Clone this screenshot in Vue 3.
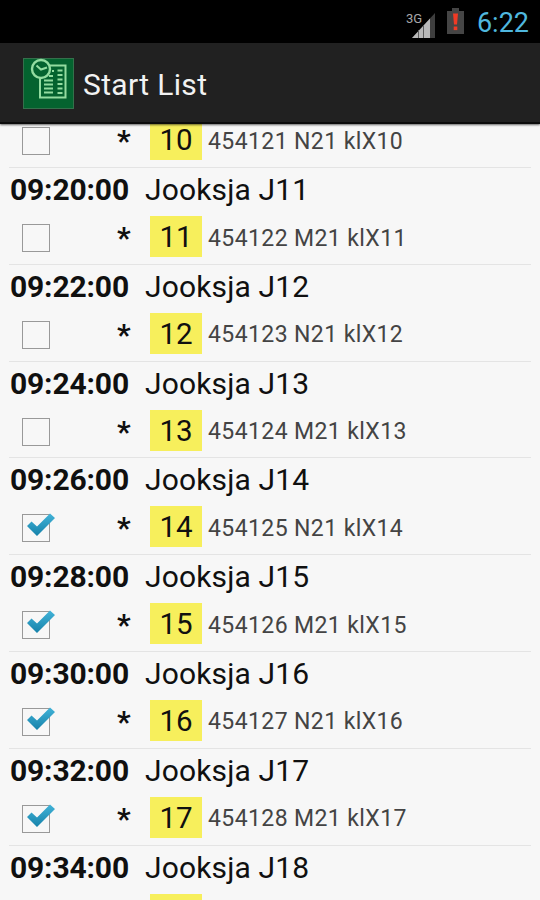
<template>
  <div class="screen">
    <div class="status-bar">
      <svg class="signal" width="32" height="30" viewBox="0 0 32 30">
        <text x="0" y="13" class="network" textLength="16">3G</text>
        <path d="M6 28L29 3v25z" fill="#3e3e3e" />
        <path d="M6 28L24 8.5V28z" fill="#b9b9b9" />
        <path d="M12.5 20v8M17.5 15v13" stroke="#5c5c5c" stroke-width="1" />
      </svg>
      <svg class="battery" width="17" height="26" viewBox="0 0 17 26">
        <path d="M5 0h7v3h5v23H0V3h5z" fill="#454545" />
        <path d="M6 5.5h5l-1 11H7z" fill="#f03a25" />
        <rect x="6.7" y="18.5" width="3.6" height="3.6" fill="#f03a25" />
      </svg>
      <span class="clock">6:22</span>
    </div>

    <div class="action-bar">
      <svg class="logo" width="51" height="51" viewBox="0 0 51 51">
        <rect width="51" height="51" fill="#04632f" />
        <rect x=".5" y=".5" width="50" height="50" fill="none" stroke="#34704b" />
        <g fill="none" stroke="#93dca0">
          <path d="M27 7.5h15.5v32H17V20" stroke-width="2" />
          <path
            d="M26 18h4M21 22.5h9M21 26.5h9M21 30.5h9M21 34.5h9M34.5 12.5h5M34.5 17h5M34.5 21.5h5M34.5 26h5M34.5 30.5h5M34.5 35h5M29 13h2"
            stroke-width="1.8"
          />
          <circle cx="18" cy="11" r="9" fill="#04632f" stroke-width="2.4" />
          <path d="M13.5 7.5l4.5 4 6-2" stroke-width="2" />
        </g>
      </svg>
      <h1 class="title">Start List</h1>
    </div>

    <div class="list">
      <div v-for="(r, i) in runners" :key="r.nr" class="row" :class="{ partial: i === 0 }">
        <div v-if="i > 0" class="line-top">
          <span class="time">{{ r.time }}</span>
          <span class="name">Jooksja J{{ r.nr }}</span>
        </div>
        <div v-if="i < runners.length - 1" class="line-bottom">
          <span class="checkbox">
            <svg v-if="r.checked" class="tick" width="30" height="26" viewBox="0 0 30 26">
              <defs>
                <linearGradient id="tick" x1="0" y1="0" x2="0" y2="1">
                  <stop offset="0" stop-color="#42b3d8" />
                  <stop offset="1" stop-color="#1682aa" />
                </linearGradient>
              </defs>
              <path d="M1 13l4.5-4.5 5.5 5L24 .5l5 4.5L11 23z" fill="url(#tick)" />
            </svg>
          </span>
          <span class="star">*</span>
          <span class="number">{{ r.nr }}</span>
          <span class="info">{{ r.card }} {{ r.cls }} klX{{ r.nr }}</span>
        </div>
        <div v-else class="line-bottom">
          <span class="number below"></span>
        </div>
      </div>
    </div>
  </div>
</template>

<script setup>
const runners = []

for (let nr = 10; nr <= 18; nr++) {
  runners.push({
    nr,
    time: `09:${nr * 2 - 2}:00`,
    card: 454111 + nr,
    cls: nr % 2 ? 'M21' : 'N21',
    checked: nr >= 14,
  })
}
</script>

<style>
body {
  margin: 0;
}
</style>

<style scoped>
.screen {
  display: flex;
  flex-direction: column;
  width: 540px;
  height: 900px;
  overflow: hidden;
  background: #f7f7f7;
  color: #101010;
  font-family: Roboto, "Liberation Sans", sans-serif;
}

.status-bar {
  display: flex;
  flex: none;
  align-items: center;
  justify-content: flex-end;
  box-sizing: border-box;
  height: 43px;
  padding-right: 11px;
  background: #000;
}

.network {
  font-size: 13px;
  fill: #a8a8a8;
}

.signal {
  margin: 6px 9px 0 0;
}

.battery {
  margin: -2px 13px 0 0;
}

.clock {
  padding-top: 3px;
  color: #4fb7de;
  font-size: 27px;
}

.action-bar {
  position: relative;
  z-index: 1;
  display: flex;
  flex: none;
  align-items: center;
  box-sizing: border-box;
  height: 81px;
  padding: 2px 0 0 23px;
  border-bottom: 2px solid #0c0c0c;
  background: #212121;
  box-shadow: 0 1px 2px rgba(0, 0, 0, 0.6);
}

.title {
  margin: 1px 0 0 9px;
  color: #f2f2f2;
  font-size: 30px;
  font-weight: 400;
  letter-spacing: 0.35px;
}

.list {
  flex: 1;
  min-height: 0;
  overflow: hidden;
}

.row {
  box-sizing: border-box;
  height: 96.8px;
  margin: 0 9px;
  border-bottom: 1px solid #e4e4e4;
}

/* first row is scrolled half under the action bar */
.partial {
  height: 49px;
  margin-top: -5px;
}

.line-top {
  display: flex;
  height: 48px;
  line-height: 44px;
  font-size: 30px;
}

.time {
  width: 135px;
  padding-left: 1px;
  font-weight: 700;
  letter-spacing: -0.15px;
}

.name {
  letter-spacing: 0.15px;
}

.line-bottom {
  display: flex;
  align-items: center;
  height: 41px;
}

.checkbox {
  position: relative;
  box-sizing: border-box;
  width: 28px;
  height: 28px;
  margin: 3px 0 0 13px;
  border: 1.5px solid #999;
}

.tick {
  position: absolute;
  top: -2px;
  left: 3px;
}

.star {
  width: 14px;
  margin-left: 67px;
  padding-top: 2px;
  font-size: 30px;
  font-weight: 700;
}

.number {
  width: 52px;
  height: 41px;
  margin-left: 19px;
  background: #f7ef5c;
  font-size: 29.5px;
  line-height: 43px;
  text-align: center;
}

.below {
  margin-left: 141px;
}

.info {
  margin-left: 6px;
  padding-top: 3px;
  color: #444;
  font-size: 23px;
  letter-spacing: 0.4px;
}
</style>
